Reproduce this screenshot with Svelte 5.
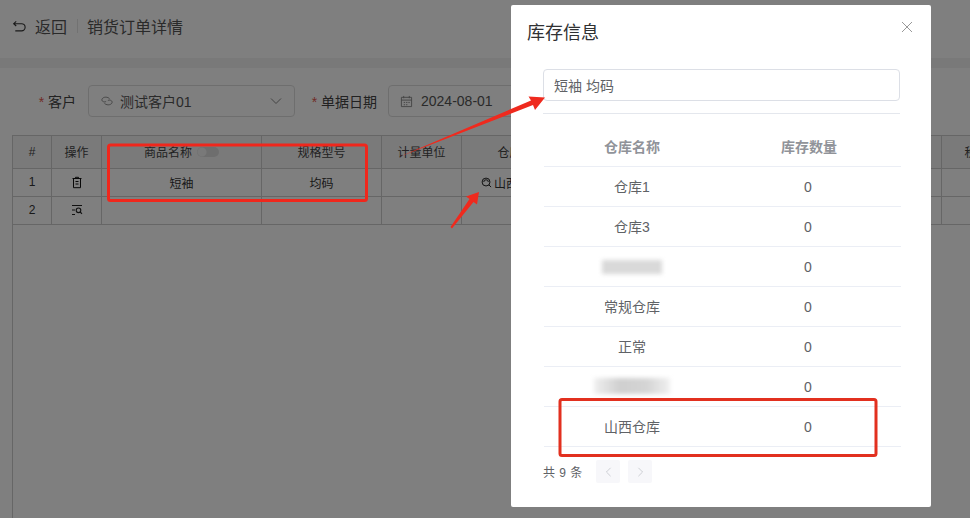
<script>
  const headers = ['#', '操作', '商品名称', '规格型号', '计量单位', '仓库名称', '数量', '单价', '金额', '税率'];
  const stock = [
    { name: '仓库1' },
    { name: '仓库3' },
    { name: '', blur: 'short' },
    { name: '常规仓库' },
    { name: '正常' },
    { name: '', blur: 'long' },
    { name: '山西仓库' }
  ];
</script>

<div class="page">
  <header class="head">
    <svg class="back" viewBox="0 0 16 16" width="15" height="15" aria-hidden="true">
      <path d="M4.500 2.500 1.800 5 4.500 7.500M2 5h8.200a3.800 3.800 0 0 1 0 7.600H3.500" fill="none" stroke="#333" stroke-width="1.200"/>
    </svg>
    <span class="backtext">返回</span>
    <i class="sep"></i>
    <span class="title">销货订单详情</span>
  </header>
  <div class="band"></div>

  <div class="form">
    <label class="lab lab1"><b>*</b> 客户</label>
    <div class="field customer">
      <svg viewBox="0 0 16 16" width="14" height="14" aria-hidden="true">
        <path d="M11 5.500C9 3 4 3 2.500 5.500S4.500 10 7 8.500M5 10.500c2 2.500 7 2.500 8.500 0S11.500 6 9 7.500" fill="none" stroke="#888" stroke-width="1.100"/>
      </svg>
      <span>测试客户01</span>
      <svg class="chev" viewBox="0 0 12 12" width="12" height="12" aria-hidden="true">
        <path d="M1 3.500 6 8.500 11 3.500" fill="none" stroke="#888" stroke-width="1"/>
      </svg>
    </div>
    <label class="lab lab2"><b>*</b> 单据日期</label>
    <div class="field date">
      <svg viewBox="0 0 14 14" width="13" height="13" aria-hidden="true">
        <path d="M1.500 2.500h11v10h-11zM1.500 5.500h11M4 1v2.500M10 1v2.500M4 8h1.500M6.500 8H8M9 8h1.500M4 10.500h1.500M6.500 10.500H8" fill="none" stroke="#888" stroke-width="1"/>
      </svg>
      <span>2024-08-01</span>
    </div>
  </div>

  <div class="gridwrap">
    <div class="grid">
      {#each headers as h, i}
        <div class="cell hd">
          <span>{h}</span>
          {#if i === 2}<i class="toggle"></i>{/if}
        </div>
      {/each}

      <div class="cell">1</div>
      <div class="cell">
        <svg viewBox="0 0 12 12" width="12" height="13" aria-hidden="true">
          <path d="M1.500 2h9M4.500 2V.8h3V2M2.500 2v9.200h7V2M4.500 5h3M4.500 7.500h3" fill="none" stroke="#111" stroke-width="1"/>
        </svg>
      </div>
      <div class="cell">短袖</div>
      <div class="cell">均码</div>
      <div class="cell"></div>
      <div class="cell wh">
        <svg viewBox="0 0 12 12" width="11" height="11" aria-hidden="true">
          <circle cx="5.500" cy="5.500" r="4.300" fill="none" stroke="#111" stroke-width="1"/>
          <path d="M8.500 8.500 11 11M3 5.500a2.500 2.500 0 0 1 5 0" fill="none" stroke="#111" stroke-width="1"/>
        </svg>
        <span>山西仓库</span>
      </div>
      {#each Array(4) as _}<div class="cell"></div>{/each}

      <div class="cell">2</div>
      <div class="cell">
        <svg viewBox="0 0 12 12" width="12" height="12" aria-hidden="true">
          <path d="M1 1.500h10M1 6h3M1 10.500h3" fill="none" stroke="#222" stroke-width="1"/>
          <circle cx="7.500" cy="6.300" r="2.300" fill="none" stroke="#222" stroke-width="1.100"/>
          <path d="M9.200 8 11 9.800" fill="none" stroke="#222" stroke-width="1.100"/>
        </svg>
      </div>
      {#each Array(8) as _}<div class="cell"></div>{/each}
    </div>
  </div>
</div>

<div class="mask"></div>

<section class="modal">
  <h2>库存信息</h2>
  <svg class="close" viewBox="0 0 12 12" width="12" height="12" aria-hidden="true">
    <path d="M1 1l10 10M11 1 1 11" fill="none" stroke="#999" stroke-width="1"/>
  </svg>
  <div class="body">
    <div class="input">短袖 均码</div>
    <hr />
    <div class="rows">
      <div class="row rowhd"><span>仓库名称</span><span>库存数量</span></div>
      {#each stock as s}
        <div class="row">
          <span>{#if s.blur}<i class="smudge {s.blur}"></i>{:else}{s.name}{/if}</span>
          <span class="num">0</span>
        </div>
      {/each}
    </div>
    <div class="pager">
      <span>共 9 条</span>
      <button aria-label="上一页">
        <svg viewBox="0 0 8 12" width="7" height="10"><path d="M6.500 1 1.500 6l5 5" fill="none" stroke="#c4c7cc" stroke-width="1"/></svg>
      </button>
      <button aria-label="下一页">
        <svg viewBox="0 0 8 12" width="7" height="10"><path d="M1.500 1l5 5-5 5" fill="none" stroke="#c4c7cc" stroke-width="1"/></svg>
      </button>
    </div>
  </div>
</section>

<svg class="marks" viewBox="0 0 970 518" width="970" height="518" aria-hidden="true">
  <rect x="108.500" y="145" width="258" height="55.500" rx="2" fill="none" stroke="#f0271c" stroke-width="3"/>
  <rect x="560" y="399.500" width="316" height="56" rx="2" fill="none" stroke="#e2301f" stroke-width="3"/>
  <path d="M399 157 L531 100.500 L528.500 96.500 L545 97.500 L535 110 L533 105 Z" fill="#ef2a1e"/>
  <path d="M450.500 227 L452 228.500 L473.500 202 L477 204.500 L479 192 L466 196.500 L469.500 199 Z" fill="#ef2a1e"/>
</svg>

<style>
  :global(body) {
    margin: 0;
    overflow: hidden;
    background: #fff;
  }
  :global(html) {
    overflow: hidden;
  }
  .page,
  .modal {
    font-family: "Liberation Sans", "Noto Sans CJK SC", sans-serif;
  }
  .page {
    width: 970px;
    height: 518px;
    overflow: hidden;
    background: #fff;
    color: #333;
  }
  .head {
    height: 58px;
    box-sizing: border-box;
    padding: 0 0 6px 12px;
    display: flex;
    align-items: center;
    font-size: 16px;
    color: #555;
  }
  .back {
    margin-right: 8px;
  }
  .sep {
    width: 1px;
    height: 14px;
    background: #e4e4e4;
    margin: 0 9px 0 10px;
  }
  .band {
    height: 10px;
    background: #f2f2f2;
  }
  .form {
    display: flex;
    align-items: center;
    margin-top: 17px;
    font-size: 14px;
    color: #444;
  }
  .lab {
    text-align: right;
    padding-bottom: 1px;
  }
  .lab b {
    color: #e4574e;
    font-weight: 400;
  }
  .lab1 {
    width: 76px;
    margin-right: 12px;
  }
  .lab2 {
    width: 66px;
    margin: 0 11px 0 16px;
    white-space: nowrap;
  }
  .field {
    height: 32px;
    box-sizing: border-box;
    border: 1px solid #ddd;
    border-radius: 4px;
    display: flex;
    align-items: center;
    gap: 6px;
    padding: 0 11px;
    color: #555;
  }
  .customer {
    width: 207px;
    position: relative;
  }
  .chev {
    position: absolute;
    right: 12px;
    top: 9px;
  }
  .date {
    width: 200px;
    gap: 8px;
  }
  .gridwrap {
    margin: 18px 0 0 12px;
    height: 400px;
    border-left: 1px solid #ccc;
  }
  .grid {
    display: grid;
    grid-template-columns: 39px 50px 160px 120px 80px 120px 120px 120px 120px 70px;
    grid-template-rows: 33px 28px 28px;
    width: 1000px;
    border-top: 1px solid #ccc;
    font-size: 12px;
  }
  .cell {
    box-sizing: border-box;
    padding-bottom: 1px;
    border-right: 1px solid #ccc;
    border-bottom: 1px solid #ccc;
    display: flex;
    align-items: center;
    justify-content: center;
    white-space: nowrap;
    overflow: hidden;
  }
  .hd {
    background: #f5f5f5;
    color: #444;
    gap: 5px;
  }
  .wh {
    justify-content: flex-start;
    padding-left: 19px;
    gap: 2px;
  }
  .toggle {
    width: 22px;
    height: 10px;
    border-radius: 5px;
    background: radial-gradient(circle at 5px 5px, #f2f2f2 4px, #dcdcdc 5px);
  }
  .mask {
    position: fixed;
    inset: 0;
    background: rgba(0, 0, 0, 0.5);
  }
  .modal {
    position: fixed;
    left: 511px;
    top: 5px;
    width: 420px;
    height: 502px;
    background: #fff;
    border-radius: 2px;
    color: #606266;
    font-size: 14px;
  }
  h2 {
    margin: 0;
    padding: 16px 0 0 16px;
    font-size: 18px;
    line-height: 24px;
    font-weight: 400;
    color: #303133;
  }
  .close {
    position: absolute;
    right: 18px;
    top: 16px;
  }
  .body {
    padding: 24px 31px 0 32px;
  }
  .input {
    height: 32px;
    box-sizing: border-box;
    border: 1px solid #dcdfe6;
    border-radius: 4px;
    padding: 0 0 1px 10px;
    display: flex;
    align-items: center;
    color: #606266;
  }
  hr {
    margin: 12px 0 0;
    border: 0;
    border-top: 1px solid #e4e7ed;
  }
  .rows {
    margin-left: 1px;
    margin-right: -1px;
  }
  .row {
    height: 40px;
    box-sizing: border-box;
    display: grid;
    grid-template-columns: 176px 178px;
    align-items: center;
    border-bottom: 1px solid #ebeef5;
    text-align: center;
    padding-bottom: 2px;
  }
  .num {
    position: relative;
    top: 1px;
    left: -1px;
  }
  .rowhd {
    height: 53px;
    padding: 12px 0 1px;
    color: #909399;
    font-weight: 700;
  }
  .smudge {
    display: inline-block;
    vertical-align: middle;
    filter: blur(2px);
  }
  .short {
    width: 60px;
    height: 14px;
    margin-top: 2px;
    background: #d9d9d9;
  }
  .long {
    width: 76px;
    height: 16px;
    background: linear-gradient(90deg, #efefef, #cfcfcf 35%, #d5d5d5 70%, #f0f0f0);
  }
  .pager {
    display: flex;
    align-items: center;
    margin-top: 13px;
    font-size: 12px;
    color: #606266;
  }
  .pager span {
    width: 53px;
    word-spacing: 1px;
  }
  button {
    width: 24px;
    height: 23px;
    padding: 0;
    margin-right: 8px;
    border: 0;
    border-radius: 2px;
    background: #f7f7fa;
    display: flex;
    align-items: center;
    justify-content: center;
  }
  .marks {
    position: fixed;
    left: 0;
    top: 0;
    pointer-events: none;
  }
</style>
